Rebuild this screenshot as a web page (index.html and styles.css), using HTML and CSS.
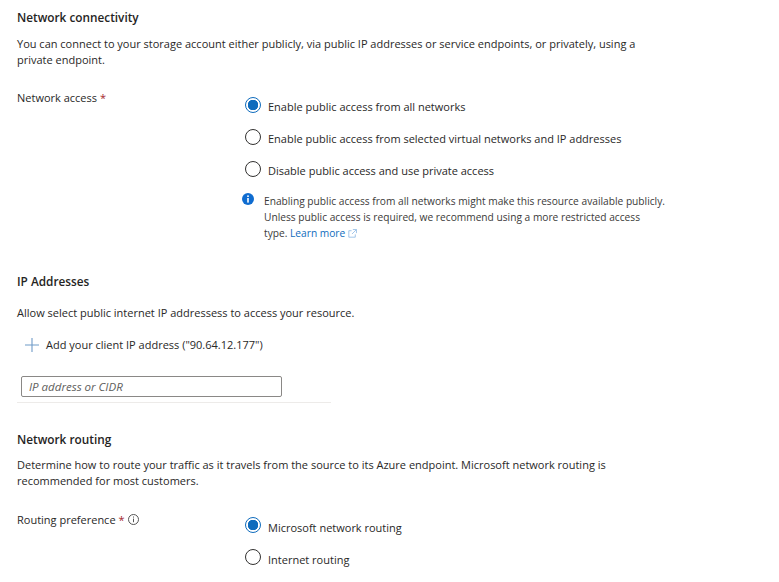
FILE: index.html
```html
<!DOCTYPE html>
<html lang="en">
<head>
<meta charset="utf-8">
<title>Network connectivity</title>
<link rel="stylesheet" href="styles.css">
</head>
<body>
<main class="page">
  <section class="section first">
    <h2 class="title">Network connectivity</h2>
    <p class="desc">You can connect to your storage account either publicly, via public IP addresses or service endpoints, or privately, using a private endpoint.</p>
    <div class="row access-row">
      <div class="label"><span>Network access</span><span class="req">*</span></div>
      <div class="options">
        <div class="option"><span class="radio on"></span><span class="opt-text">Enable public access from all networks</span></div>
        <div class="option"><span class="radio"></span><span class="opt-text">Enable public access from selected virtual networks and IP addresses</span></div>
        <div class="option"><span class="radio"></span><span class="opt-text">Disable public access and use private access</span></div>
        <div class="note">
          <svg class="note-icon" width="12" height="12" viewBox="0 0 12 12"><circle cx="6" cy="6" r="6" fill="#0f6cd0"/><rect x="5.2" y="5" width="1.6" height="4.6" fill="#fff"/><rect x="5.2" y="2.4" width="1.6" height="1.6" fill="#fff"/></svg>
          <p class="note-text">Enabling public access from all networks might make this resource available publicly. Unless public access is required, we recommend using a more restricted access<br>type. <a class="link">Learn more <svg class="ext" width="9" height="9" viewBox="0 0 10 10" fill="none" stroke="#7fb0e0" stroke-width="0.8"><path d="M4 1.9H.9v7.2h7.2V6M5.4.6h4v4M9.2.8 4.4 5.6"/></svg></a></p>
        </div>
      </div>
    </div>
  </section>
  <section class="section ip">
    <h2 class="title">IP Addresses</h2>
    <p class="desc">Allow select public internet IP addressess to access your resource.</p>
    <div class="add">
      <svg width="14" height="14" viewBox="0 0 14 14" stroke="#6f9bc8" stroke-width="1.1"><path d="M7 0v14M0 7h14"/></svg>
      <span>Add your client IP address ("90.64.12.177")</span>
    </div>
    <div class="input-wrap"><input class="input" type="text" placeholder="IP address or CIDR"></div>
  </section>
  <section class="section routing">
    <h2 class="title">Network routing</h2>
    <p class="desc">Determine how to route your traffic as it travels from the source to its Azure endpoint. Microsoft network routing is recommended for most customers.</p>
    <div class="row routing-row">
      <div class="label"><span>Routing preference</span><span class="req">*</span>
        <svg class="help" width="11" height="11" viewBox="0 0 11 11" fill="none"><circle cx="5.5" cy="5.5" r="5" stroke="#555"/><path d="M5.5 4.6v3.6M5.5 2.5v1.1" stroke="#555"/></svg>
      </div>
      <div class="options routing-options">
        <div class="option"><span class="radio on"></span><span class="opt-text">Microsoft network routing</span></div>
        <div class="option"><span class="radio"></span><span class="opt-text">Internet routing</span></div>
      </div>
    </div>
  </section>
</main>
</body>
</html>
```

FILE: styles.css
```css
html, body {
  margin: 0;
  padding: 0;
  background: #fff;
}
body {
  font-family: "Open Sans", "Noto Sans", sans-serif;
  font-size: 11px;
  line-height: 16px;
  color: #292827;
  width: 779px;
  height: 582px;
  overflow: hidden;
}
.page {
  padding: 10px 0 0 17px;
}
.title {
  margin: 0;
  font-size: 11.8px;
  line-height: 14px;
  font-weight: 600;
  color: #252423;
}
.desc {
  margin: 12px 0 0;
  width: 630px;
}
.row {
  display: grid;
  grid-template-columns: 227px 1fr;
}
.access-row {
  margin-top: 22px;
}
.label {
  display: flex;
  align-items: flex-start;
  gap: 3px;
  white-space: nowrap;
}
.req {
  color: #a4262c;
}
.help {
  margin: 2px 0 0;
}
.options {
  padding-top: 1px;
}
.routing-options {
  padding-top: 0;
}
.option {
  display: flex;
  align-items: center;
  gap: 7px;
  height: 32px;
}
.radio {
  box-sizing: border-box;
  width: 16px;
  height: 16px;
  border: 1px solid #323130;
  border-radius: 50%;
  margin: -4px 0 0 1px;
  flex: none;
}
.routing-options .radio {
  margin-top: -6px;
}
.radio.on {
  border-color: #0f6cbd;
  background: radial-gradient(circle, #0f6cbd 0 5px, #fff 5.5px);
}
.note {
  display: flex;
  gap: 10px;
  margin-top: 6px;
}
.note-icon {
  flex: none;
  margin: 0 0 0 -2px;
}
.note-text {
  margin: 0;
  font-size: 10.2px;
  width: 410px;
  color: #3b3a39;
}
.link {
  color: #0f6cbd;
}
.ext {
  vertical-align: -1px;
}
.ip {
  margin-top: 33px;
}
.ip .desc {
  margin-top: 17px;
}
.add {
  display: flex;
  align-items: center;
  gap: 7px;
  margin: 16px 0 0 8px;
}
.input-wrap {
  width: 314px;
  padding: 0 0 5px 4px;
  margin-top: 23px;
  border-bottom: 1px solid #edebe9;
  box-sizing: border-box;
}
.input {
  display: block;
  box-sizing: border-box;
  width: 261px;
  height: 21px;
  border: 1px solid #8a8886;
  border-radius: 2px;
  padding: 0 7px;
  font: italic 11.5px "Open Sans", "Noto Sans", sans-serif;
  color: #292827;
}
.input::placeholder {
  color: #605e5c;
  opacity: 1;
}
.routing {
  margin-top: 29px;
}
.routing .desc {
  margin-top: 11px;
}
.routing-row {
  margin-top: 23px;
}
```
